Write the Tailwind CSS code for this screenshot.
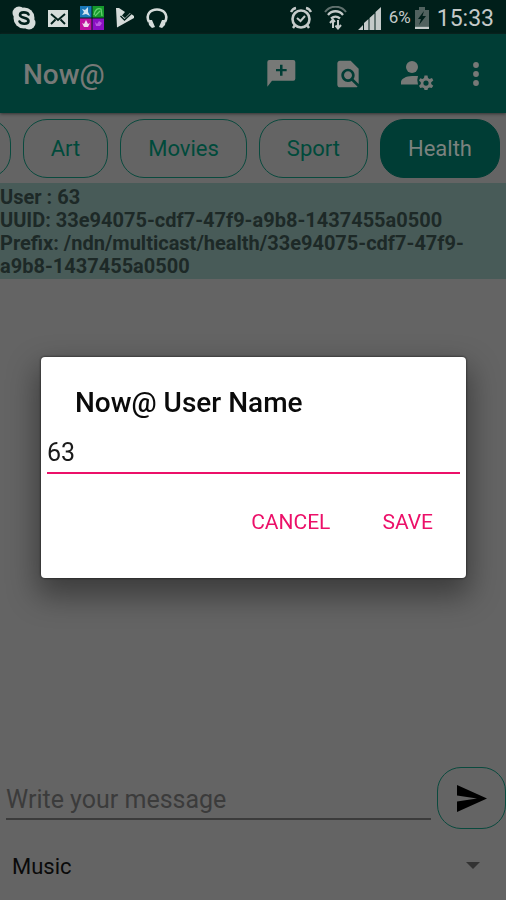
<!DOCTYPE html>
<html lang="en">
<head>
<meta charset="utf-8">
<meta name="viewport" content="width=device-width, initial-scale=1">
<title>Now@</title>
<script src="https://cdn.jsdelivr.net/npm/@tailwindcss/browser@4"></script>
</head>
<body class="flex min-h-screen flex-col overflow-x-hidden bg-[#646464] font-['Roboto',sans-serif] text-[#0a0a0a]">

<!-- System status bar -->
<div class="flex h-[34px] shrink-0 items-center justify-between bg-[#001f1a] px-3 pt-[2px] text-[#c4cac9]">
  <div class="flex items-center gap-3">
    <svg class="size-6" viewBox="0 0 24 24" role="img" aria-label="Skype"><g fill="#d5dcda"><circle cx="12" cy="12" r="10.5"/><circle cx="7" cy="7" r="6.5"/><circle cx="17" cy="17" r="6.5"/></g><path d="M16.500 8.500C15 5.700 8 5.500 8 9C8 12.500 16.500 11 16.500 15C16.500 18.500 9 18.500 7.500 15.500" fill="none" stroke="#001f1a" stroke-width="2.600" stroke-linecap="round"/></svg>
    <svg class="h-[17px] w-5" viewBox="0 0 20 17" role="img" aria-label="Mail"><path d="M0 0H20V17H0Z" fill="#d5dcda"/><path d="M3 4L10 10L17 4M3 14L7.500 9.500M17 14L12.500 9.500" fill="none" stroke="#001f1a" stroke-width="1.900"/></svg>
    <svg class="size-6" viewBox="0 0 24 24" role="img" aria-label="Collage"><path d="M0 0H11.500V11.500H0Z" fill="#1878b8"/><path d="M12.500 0H24V11.500H12.500Z" fill="#159a2c"/><path d="M0 12.500H11.500V24H0Z" fill="#c010a0"/><path d="M12.500 12.500H24V24H12.500Z" fill="#8b10c4"/><path d="M2 3L5 4L8 1L8 6L10 10L6 8L2 9L4 6Z" fill="#cfe3ef"/><path d="M14 9C15 3 18 2 21 3L22 10M15 10L20 5" fill="none" stroke="#65cf70" stroke-width="1.300"/><path d="M2 17L4 18L6 14L8 18L10 17L8 21H4Z" fill="#f0d5eb"/><path d="M15 16L17 18L19 15L22 17L20 20H16Z" fill="#b95be0"/></svg>
    <svg class="h-5 w-[18px]" viewBox="0 0 18 20" role="img" aria-label="Play"><path d="M0 0H3L9 4L6 7.500L9 10L14 5L18 8V10L1 19.500Z" fill="#d5dcda"/><path d="M4.500 8L8.500 12L17 4" fill="none" stroke="#001f1a" stroke-width="1.400"/></svg>
    <svg class="h-[21px] w-[22px]" viewBox="0 0 22 21" role="img" aria-label="Headphones"><path d="M3 14C-1 6 5 1.500 11 1.500S23 6 19 14" fill="none" stroke="#d5dcda" stroke-width="2.600"/><path d="M2 12L6 12L9 19L6 20L3 17ZM20 12L16 12L13 19L16 20L19 17Z" fill="#d5dcda"/></svg>
  </div>
  <div class="flex items-center gap-[7px]">
    <svg class="mr-1 size-6" viewBox="0 0 24 24" fill="none" stroke="#c4cac9" role="img" aria-label="Alarm"><circle cx="12" cy="13" r="8.500" stroke-width="2.600"/><path d="M8 12L11.500 15L16 10" stroke-width="2"/><path d="M2 6C3 4 4.500 2.500 7 2M22 6C21 4 19.500 2.500 17 2M6 19L4 22M18 19L20 22" stroke-width="2.400"/></svg>
    <svg class="h-6 w-[23px]" viewBox="0 0 23 24" fill="none" role="img" aria-label="Wi-Fi"><path d="M1 6C6-1 17-1 22 6" stroke="#60716e" stroke-width="2"/><path d="M4 9C8 4 15 4 19 9M7 12.500C10 10 13 10 16 12.500" stroke="#c4cac9" stroke-width="2.300"/><path d="M9 22V14M6 17L9 13.500L11 16M14 14V22M11.500 19.500L14 22.500L17 19" stroke="#c4cac9" stroke-width="2"/></svg>
    <svg class="ml-1 h-[23px] w-6" viewBox="0 0 24 23" fill="#c4cac9" role="img" aria-label="Signal"><path d="M0 23L5 18V23ZM6 23V16L10.500 12V23ZM11.500 23V11L16.500 6.500V23ZM17.500 23V5L23 0V23Z"/></svg>
    <span class="text-[17px]">6%</span>
    <svg class="-ml-1 h-[22px] w-4" viewBox="0 0 16 22" role="img" aria-label="Battery charging"><path d="M5 0H11V3H15V19H1V3H5Z" fill="#51625f"/><path d="M10 4L4 12H7L5 18L12 9H8.500Z" fill="#001f1a"/><path d="M1 19.500H15V22H1Z" fill="#c4cac9"/></svg>
    <time class="text-[23px] leading-none">15:33</time>
  </div>
</div>

<!-- App bar -->
<header class="flex h-[79px] shrink-0 items-center bg-[#003d35] pl-[23px] text-[#777977] shadow-[0_1px_3px_#333]">
  <h1 class="grow pt-[2px] text-[28px] font-medium">Now@</h1>
  <nav class="flex items-center gap-9 pr-6" aria-label="Actions">
    <button aria-label="Add message"><svg class="size-8" viewBox="0 0 24 24" fill="currentColor"><path fill-rule="evenodd" d="M4 1.500H22Q23.500 1.500 23.500 3V15.500Q23.500 17 22 17H6L2.500 21.500V3Q2.500 1.500 4 1.500ZM12 5V8.300H9V10H12V13.300H13.900V10H17V8.300H13.900V5Z"/></svg></button>
    <button aria-label="Find in page"><svg class="size-8" viewBox="0 0 24 24" fill="currentColor"><path d="M20 19.590V8l-6-6H6c-1.100 0-1.990.900-1.990 2L4 20c0 1.100.890 2 1.990 2H18c.450 0 .850-.150 1.190-.400l-4.430-4.430c-.800.520-1.740.830-2.760.830-2.760 0-5-2.240-5-5s2.240-5 5-5 5 2.240 5 5c0 1.020-.310 1.960-.830 2.750L20 19.590zM9 13c0 1.660 1.340 3 3 3s3-1.340 3-3-1.340-3-3-3-3 1.340-3 3z"/></svg></button>
    <button aria-label="Manage account"><svg class="h-8 w-[34px]" viewBox="0 0 34 32" fill="currentColor"><circle cx="12" cy="9" r="6"/><path d="M18 18H12C6 18 1 21 1 24V26.500H18Q16.500 22 18 18Z"/><path fill-rule="evenodd" d="M24.500 17.500H27.500L28 20L29.500 20.900L32 20L33.300 22.500L31.200 24.300V26L33.300 27.700L31.700 30L29.500 29.400L28 30.300L27.500 32H24.500L24 30.300L22.500 29.400L20.200 30L19 27.700L20.800 26V24.300L19 22.500L20.200 20.200L22.500 20.900L24 20ZM26 22.500A2.600 2.600 0 1 0 26 27.700A2.600 2.600 0 1 0 26 22.500Z"/></svg></button>
    <button aria-label="More options"><svg class="h-6 w-3" viewBox="0 0 12 24" fill="currentColor"><circle cx="6" cy="3" r="2.900"/><circle cx="6" cy="12" r="2.900"/><circle cx="6" cy="21" r="2.900"/></svg></button>
  </nav>
</header>

<!-- Topic chips, scrolled to the end -->
<div class="flex h-[70px] shrink-0 items-center justify-end gap-3 overflow-hidden pr-[6px] text-[22px] text-[#004a3b]">
  <button class="h-[59px] w-20 shrink-0 rounded-3xl border border-[#0a4a3e]" aria-label="Previous topic"></button>
  <button class="h-[59px] shrink-0 rounded-3xl border border-[#0a4a3e] px-[27px]">Art</button>
  <button class="h-[59px] shrink-0 rounded-3xl border border-[#0a4a3e] px-[27px]">Movies</button>
  <button class="h-[59px] shrink-0 rounded-3xl border border-[#0a4a3e] px-[27px]">Sport</button>
  <button class="h-[59px] shrink-0 rounded-3xl border border-[#003d35] bg-[#003d35] px-[27px] text-[#7b827f]">Health</button>
</div>

<section class="shrink-0 bg-[#485b58] pt-[3px] pr-6 pb-px text-xl leading-[23px] font-bold text-[#1d2927]">
  <p>User : 63</p>
  <p>UUID: 33e94075-cdf7-47f9-a9b8-1437455a0500</p>
  <p>Prefix: /ndn/multicast/health/33e94075-cdf7-47f9-a9b8-1437455a0500</p>
</section>

<main class="grow"></main>

<form class="flex shrink-0 items-center gap-[6px] pl-[6px]">
  <input class="h-11 min-w-0 grow border-b-2 border-[#3b3b3b] pt-1 text-[25px] outline-none placeholder:text-[#3b3b3b]" type="text" aria-label="Write your message" placeholder="Write your message">
  <button type="button" aria-label="Send" class="flex h-[62px] w-[69px] shrink-0 items-center justify-center rounded-3xl border border-[#0a4a3e]"><svg class="h-[27px] w-[30px]" viewBox="0 0 30 27" fill="#000"><path d="M0 0L30 13.500L0 27V16.500L20 13.500L0 10.500Z"/></svg></button>
</form>
<div class="relative h-[71px] shrink-0">
  <select class="h-full w-full appearance-none pt-1 pl-3 text-[22px]" aria-label="Topic"><option>Music</option></select>
  <svg class="pointer-events-none absolute top-[33px] right-[26px] h-[7px] w-[14px]" viewBox="0 0 14 7" fill="#333"><path d="M0 0H14L7 7Z"/></svg>
</div>

<!-- User name dialog -->
<div class="fixed inset-x-0 top-[34px] bottom-0 flex items-center justify-center pr-10 pl-[41px]">
  <form role="dialog" aria-labelledby="dialog-title" class="w-full rounded-[4px] bg-white px-[6px] pt-7 pb-8 shadow-[0_14px_30px_4px_rgba(0,0,0,0.4),0_0_2px_1px_rgba(0,0,0,0.35)]">
    <label id="dialog-title" for="name" class="block px-7 text-[28px] leading-9 font-medium">Now@ User Name</label>
    <input id="name" type="text" value="63" class="mt-2 block h-[45px] w-full border-b-2 border-[#ec1069] pt-1 text-[25px] text-[#1a1a1a] outline-none">
    <div class="mt-[26px] flex justify-end text-[21px] text-[#ec1069]">
      <button type="button" class="h-[46px] px-[25px]">CANCEL</button>
      <button type="button" class="h-[46px] px-[27px]">SAVE</button>
    </div>
  </form>
</div>
</body>
</html>
